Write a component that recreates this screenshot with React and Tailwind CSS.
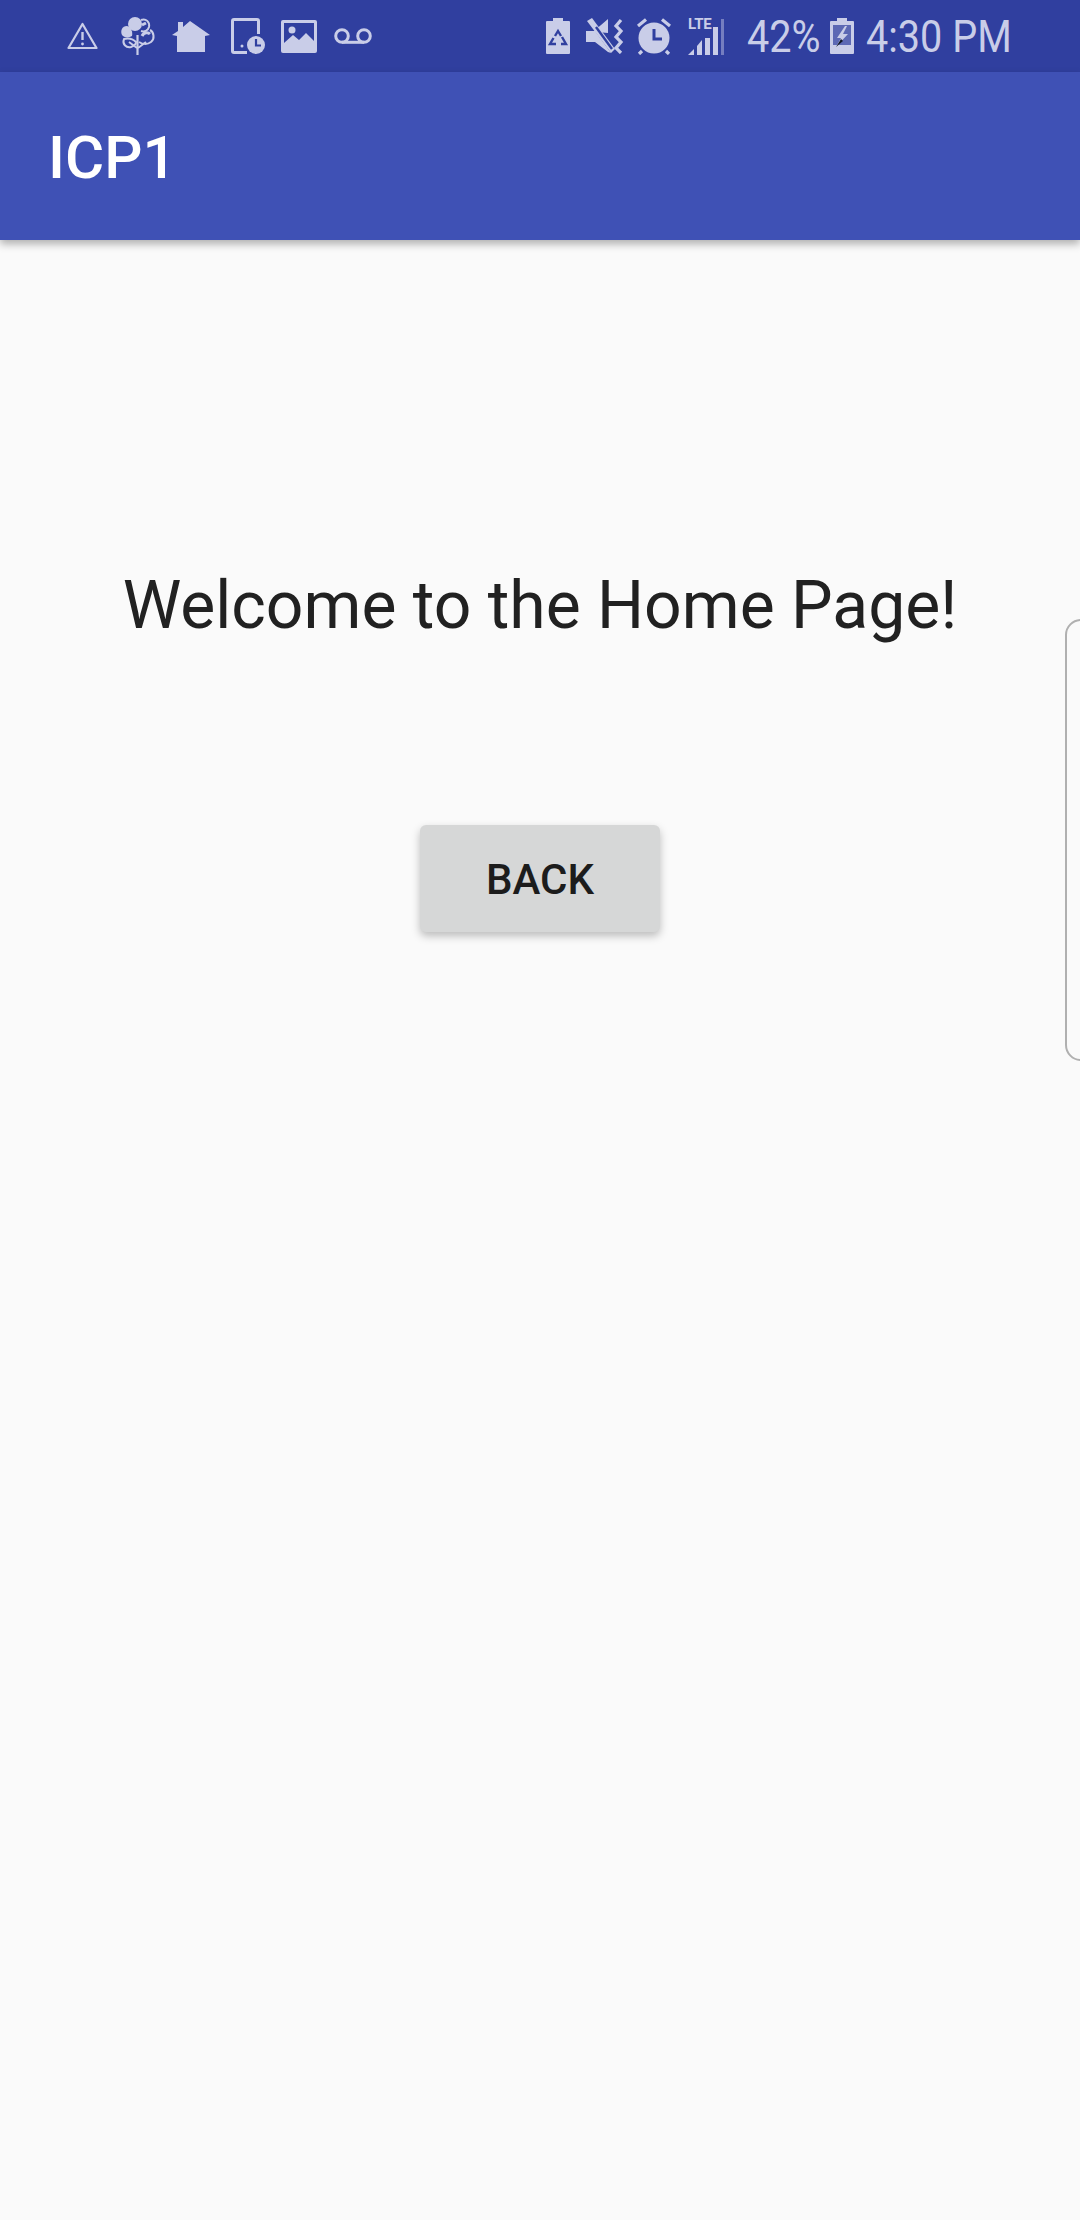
import React from 'react';

// status bar glyphs, all drawn in currentColor
const WarningIcon = () => (
  <svg width="31" height="28" viewBox="0 0 31 28" fill="none" stroke="currentColor" strokeWidth="2.2" strokeLinejoin="round">
    <path d="M15.5 2 L29.5 26 H1.5 Z" />
    <path d="M15.5 10 V18" strokeWidth="2.4" />
    <circle cx="15.5" cy="22" r="1.4" fill="currentColor" stroke="none" />
  </svg>
);

const CottonIcon = () => (
  <svg width="35" height="38" viewBox="0 0 35 38" fill="none" stroke="currentColor" strokeWidth="2">
    <circle cx="15" cy="7" r="7" fill="currentColor" stroke="none" />
    <path d="M21 3 C26 1 30 5 29 10 C28 14 24 15 21 14" />
    <path d="M22 8 L26 6" strokeWidth="3" />
    <path d="M7 9 C2 9 0 14 2 18 C4 21 9 21 12 19 C13 15 11 10 7 9Z" fill="currentColor" stroke="none" />
    <path d="M30 13 C34 15 35 22 31 25 C27 28 22 27 19 25" />
    <path d="M22 19 C24 15 28 15 30 17" strokeWidth="3" />
    <path d="M4 22 C2 27 6 31 11 30 C14 29 16 27 16 25 C13 22 8 21 4 22Z" />
    <path d="M17.5 18 V38" strokeWidth="2.2" />
    <path d="M9 25 L17 31 M26 25 L18 31" />
  </svg>
);

const HomeIcon = () => (
  <svg width="38" height="31" viewBox="0 0 38 31" fill="currentColor">
    <path d="M0 14 L6 10 V1 H11 V6 L18 0 L38 14 L33 15 V31 H5 V15 Z" />
  </svg>
);

const TabletClockIcon = () => (
  <svg width="34" height="36" viewBox="0 0 34 36" fill="none">
    <path d="M16 34.5 H3 Q1.5 34.5 1.5 33 V3 Q1.5 1.5 3 1.5 H26 Q27.5 1.5 27.5 3 V16" stroke="currentColor" strokeWidth="3" />
    <circle cx="11" cy="28" r="1.5" fill="currentColor" />
    <circle cx="25" cy="27" r="9" fill="currentColor" />
    <path d="M25 21 V27.5 H30" stroke="#303f9f" strokeWidth="2.2" />
  </svg>
);

const ImageIcon = () => (
  <svg width="36" height="33" viewBox="0 0 36 33">
    <rect width="36" height="33" rx="2" fill="currentColor" />
    <rect x="3" y="3" width="30" height="22" fill="#303f9f" />
    <circle cx="11" cy="10" r="3.5" fill="currentColor" />
    <path d="M3 26 L3 23 L12 15 L18 20 L25 13 L33 21 V26 Z" fill="currentColor" />
  </svg>
);

const VoicemailIcon = () => (
  <svg width="38" height="16" viewBox="0 0 38 16" fill="none" stroke="currentColor" strokeWidth="3">
    <circle cx="8" cy="8" r="6.3" />
    <circle cx="30" cy="8" r="6.3" />
    <path d="M8 14.3 H30" />
  </svg>
);

const RecycleBatteryIcon = () => (
  <svg width="24" height="36" viewBox="0 0 24 36">
    <path d="M7 0 H17 V3 H23 Q24 3 24 4 V35 Q24 36 23 36 H1 Q0 36 0 35 V4 Q0 3 1 3 H7 Z" fill="currentColor" />
    <g fill="none" stroke="#303f9f" strokeWidth="2.4">
      <path d="M9 18 L12 13 L15 18" />
      <path d="M16 19 L20 26 H15" />
      <path d="M10 26 H4 L7.5 20" />
    </g>
  </svg>
);

const VibrateMuteIcon = () => (
  <svg width="39" height="36" viewBox="0 0 39 36" fill="currentColor">
    <path d="M0 13 H8 L22 1 V15 Z" />
    <path d="M0 13 H9 L25 35 L22 34 L9 24 H0 Z" />
    <path d="M1 3 L6 0 L29 31 L25 35 Z" />
    <path d="M10 9 L26 31" stroke="#303f9f" strokeWidth="2.4" />
    <path d="M35 2 L30 8 L35 13 L30 19 L35 24 L30 30 L35 35" fill="none" stroke="currentColor" strokeWidth="3.2" />
  </svg>
);

const AlarmIcon = () => (
  <svg width="36" height="37" viewBox="0 0 36 37">
    <circle cx="18" cy="20" r="15.5" fill="currentColor" />
    <path d="M18 11 V21 H26" fill="none" stroke="#303f9f" strokeWidth="3" />
    <path d="M2 8 L10 1.5 M34 8 L26 1.5 M6 33 L3 36 M30 33 L33 36" stroke="currentColor" strokeWidth="3.2" />
  </svg>
);

// LTE label is real text, the bars are drawn
const SignalIcon = () => (
  <div className="relative w-[39px] h-[37px]">
    <span className="absolute left-0 top-[-2px] text-[15px] leading-[16px] font-bold tracking-[-0.3px]">LTE</span>
    <svg className="absolute inset-0" width="39" height="37" viewBox="0 0 39 37" fill="currentColor">
      <path d="M0 37 L6 31 V37 Z" />
      <path d="M9 28 L14 22 V37 H9 Z" />
      <path d="M17 20 H22 V37 H17 Z" />
      <path d="M25 9 H30 V37 H25 Z" />
      <path d="M33 1 H36 V37 H33 Z" opacity="0.45" />
    </svg>
  </div>
);

const ChargingBatteryIcon = () => (
  <svg width="24" height="36" viewBox="0 0 24 36">
    <path d="M7 0 H17 V3 H23 Q24 3 24 4 V35 Q24 36 23 36 H1 Q0 36 0 35 V4 Q0 3 1 3 H7 Z" fill="currentColor" />
    <rect x="3" y="7" width="18" height="20" fill="#5c68b4" />
    <path d="M15 8 L7 20 H11 L6 29 L18 16 H13 L17 8 Z" fill="currentColor" />
    <path d="M11 21 L6 29 L13 23 Z" fill="#111827" />
  </svg>
);

export default function App() {
  return (
    <div className="relative min-h-[2220px] bg-[#fafafa] font-['Roboto',sans-serif] overflow-hidden">
      {/* status bar */}
      <div className="h-[72px] bg-[#303f9f] text-[#c9cde8] flex items-center pl-[67px]">
        <div className="flex items-center">
          <WarningIcon />
          <div className="ml-[22px]"><CottonIcon /></div>
          <div className="ml-[17px]"><HomeIcon /></div>
          <div className="ml-[21px]"><TabletClockIcon /></div>
          <div className="ml-[16px]"><ImageIcon /></div>
          <div className="ml-[17px]"><VoicemailIcon /></div>
        </div>
        <div className="flex items-center ml-[174px]">
          <RecycleBatteryIcon />
          <div className="ml-[16px]"><VibrateMuteIcon /></div>
          <div className="ml-[11px]"><AlarmIcon /></div>
          <div className="ml-[16px]"><SignalIcon /></div>
          <span className="ml-[20px] w-[70px] text-[45px] leading-none font-normal whitespace-nowrap origin-left scale-x-[0.88]">42%</span>
          <div className="ml-[13px]"><ChargingBatteryIcon /></div>
          <span className="ml-[12px] w-[144px] text-[45px] leading-none font-normal whitespace-nowrap origin-left scale-x-[0.88]">4:30 PM</span>
        </div>
      </div>

      {/* app bar */}
      <div className="h-[168px] bg-[#3f51b5] flex items-center pl-[48px] pt-[3px] shadow-[0_4px_8px_rgba(0,0,0,0.3)]">
        <h1 className="text-[60px] font-medium text-white leading-none">ICP1</h1>
      </div>

      {/* content */}
      <div className="flex flex-col items-center pt-[326px]">
        <p className="text-[66px] leading-[80px] text-[#212121] whitespace-nowrap">Welcome to the Home Page!</p>
        <button className="mt-[179px] w-[240px] h-[107px] pt-[2px] rounded-[6px] bg-[#d6d7d7] text-[42px] font-medium text-[#1c1c1c] shadow-[0_4px_8px_rgba(0,0,0,0.25)]">
          BACK
        </button>
      </div>

      {/* edge panel handle */}
      <div className="absolute left-[1065px] top-[619px] w-[30px] h-[442px] rounded-l-[16px] border-2 border-[#b0b0b0]" />
    </div>
  );
}
